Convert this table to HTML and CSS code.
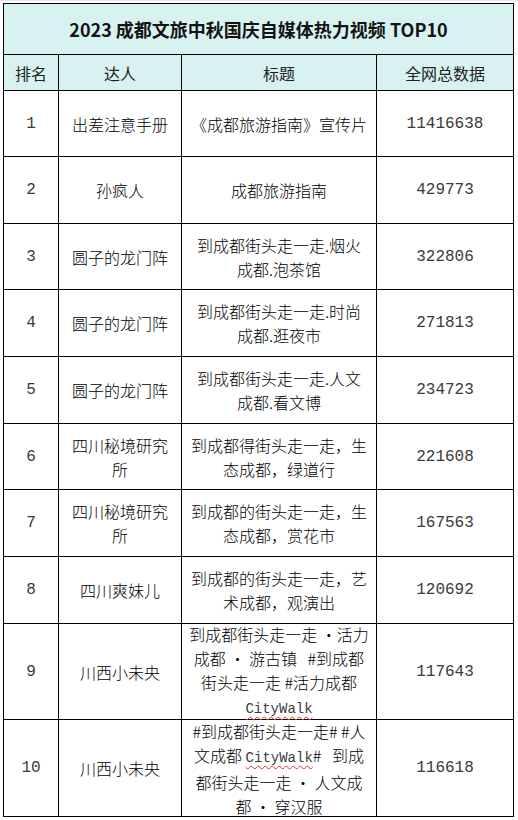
FILE: index.html
```html
<!DOCTYPE html>
<html lang="zh-CN">
<head>
<meta charset="utf-8">
<title>2023 成都文旅中秋国庆自媒体热力视频 TOP10</title>
<link rel="stylesheet" href="styles.css">
</head>
<body>
<div class="sheet">
  <div class="table">
    <div class="cell title">2023 成都文旅中秋国庆自媒体热力视频 TOP10</div>

    <div class="cell head">排名</div>
    <div class="cell head">达人</div>
    <div class="cell head">标题</div>
    <div class="cell head">全网总数据</div>

    <div class="cell num">1</div>
    <div class="cell">出差注意手册</div>
    <div class="cell">《成都旅游指南》宣传片</div>
    <div class="cell num">11416638</div>

    <div class="cell num">2</div>
    <div class="cell">孙疯人</div>
    <div class="cell">成都旅游指南</div>
    <div class="cell num">429773</div>

    <div class="cell num">3</div>
    <div class="cell">圆子的龙门阵</div>
    <div class="cell"><div class="txt">到成都街头走一走.烟火<br>成都.泡茶馆</div></div>
    <div class="cell num">322806</div>

    <div class="cell num">4</div>
    <div class="cell">圆子的龙门阵</div>
    <div class="cell"><div class="txt">到成都街头走一走.时尚<br>成都.逛夜市</div></div>
    <div class="cell num">271813</div>

    <div class="cell num">5</div>
    <div class="cell">圆子的龙门阵</div>
    <div class="cell"><div class="txt">到成都街头走一走.人文<br>成都.看文博</div></div>
    <div class="cell num">234723</div>

    <div class="cell num">6</div>
    <div class="cell"><div class="txt">四川秘境研究<br>所</div></div>
    <div class="cell"><div class="txt">到成都得街头走一走，生<br>态成都，绿道行</div></div>
    <div class="cell num">221608</div>

    <div class="cell num">7</div>
    <div class="cell"><div class="txt">四川秘境研究<br>所</div></div>
    <div class="cell"><div class="txt">到成都的街头走一走，生<br>态成都，赏花市</div></div>
    <div class="cell num">167563</div>

    <div class="cell num">8</div>
    <div class="cell">四川爽妹儿</div>
    <div class="cell"><div class="txt">到成都的街头走一走，艺<br>术成都，观演出</div></div>
    <div class="cell num">120692</div>

    <div class="cell num">9</div>
    <div class="cell">川西小未央</div>
    <div class="cell"><div class="txt">到成都街头走一走 ·活力<br>成都 · 游古镇&nbsp;&nbsp; #到成都<br>街头走一走 #活力成都<br><span class="latin">CityWalk</span></div></div>
    <div class="cell num">117643</div>

    <div class="cell num">10</div>
    <div class="cell">川西小未央</div>
    <div class="cell"><div class="txt">#到成都街头走一走# #人<br>文成都 <span class="latin">CityWalk</span>#&nbsp;&nbsp; 到成<br>都街头走一走 · 人文成<br>都 · 穿汉服</div></div>
    <div class="cell num">116618</div>
  </div>
</div>
</body>
</html>
```

FILE: styles.css
```css
html, body {
  margin: 0;
  padding: 0;
  background: #ffffff;
}

.sheet {
  padding: 2px 0 0 3px;
  border-top: 1px solid #e4e4e4;
}

.table {
  display: grid;
  width: 509px;
  grid-template-columns: 54px 122px 194px 136px;
  grid-template-rows: 50px 35px 65px 66px 65px 66px 66px 65px 66px 66px 95px 96px;
  gap: 1px;
  padding: 1px;
  background: #000000;
  font-family: "Noto Sans CJK SC", "Noto Sans", sans-serif;
  font-size: 16px;
  font-weight: 300;
  color: #000000;
}

.cell {
  background: #ffffff;
  display: flex;
  align-items: center;
  justify-content: center;
  text-align: center;
  line-height: 24px;
  padding: 0 2px;
  white-space: nowrap;
}

.txt {
  text-align: center;
}

.title {
  grid-column: 1 / -1;
  background: #d8f2f2;
  font-weight: 700;
  font-size: 18px;
  color: #141414;
}

.head {
  background: #d8f2f2;
  font-weight: 400;
  color: #222222;
}

.num {
  font-family: "Liberation Mono", "DejaVu Sans Mono", monospace;
  font-size: 16px;
  font-weight: 400;
  color: #3a3a3a;
}

.latin {
  font-family: "Liberation Mono", monospace;
  font-size: 14px;
  font-weight: 400;
  color: #3a3a3a;
  text-decoration: underline wavy #e03030;
  text-decoration-thickness: 1px;
  text-underline-offset: 3px;
}
```
